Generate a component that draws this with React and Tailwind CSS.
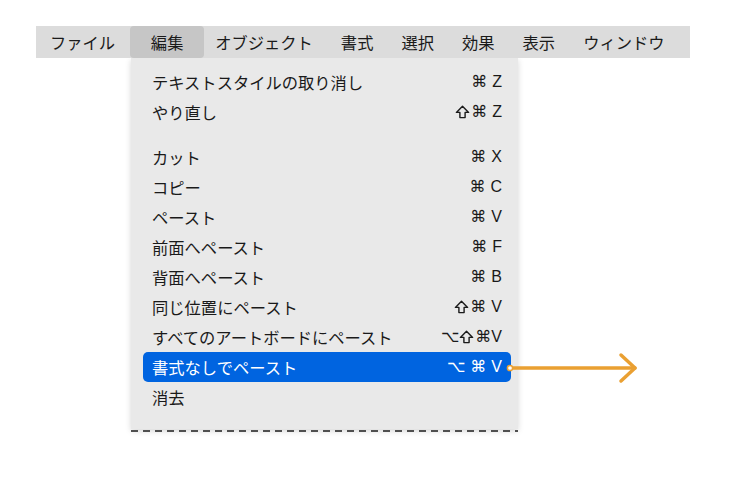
import React from 'react';

const menus = ['ファイル', '編集', 'オブジェクト', '書式', '選択', '効果', '表示', 'ウィンドウ'];

// rows of the 編集 dropdown, null = separator space
const items = [
  ['テキストスタイルの取り消し', '⌘ Z'],
  ['やり直し', '⇧⌘ Z'],
  null,
  ['カット', '⌘ X'],
  ['コピー', '⌘ C'],
  ['ペースト', '⌘ V'],
  ['前面へペースト', '⌘ F'],
  ['背面へペースト', '⌘ B'],
  ['同じ位置にペースト', '⇧⌘ V'],
  ['すべてのアートボードにペースト', '⌥⇧⌘V'],
  ['書式なしでペースト', '⌥ ⌘ V', true],
  ['消去', ''],
];

const jp = "font-['Noto_Sans_CJK_JP','Noto_Sans',sans-serif]";

// outlined shift arrow, the font one is too thin
function ShiftIcon() {
  return (
    <svg width="15" height="14" viewBox="0 0 15 14" fill="none" className="mr-[1px]">
      <path
        d="M7.5 1.2 L13.6 7.4 H10.1 V12.6 H4.9 V7.4 H1.4 Z"
        stroke="currentColor"
        strokeWidth="1.4"
        strokeLinejoin="round"
      />
    </svg>
  );
}

function Shortcut({ keys }) {
  return (
    <span className="font-['Liberation_Sans','DejaVu_Sans',sans-serif] text-[16px] flex items-center">
      {keys.split('').map((c, i) =>
        c === '⇧' ? (
          <ShiftIcon key={i} />
        ) : c === ' ' ? (
          <span key={i} className="w-[5px]" />
        ) : (
          <span key={i}>{c}</span>
        )
      )}
    </span>
  );
}

export default function App() {
  return (
    <div className={`relative w-[750px] h-[479px] bg-white overflow-hidden ${jp}`}>
      {/* menu bar */}
      <div className="relative z-10 mt-[26px] ml-[36px] w-[654px] h-[32px] bg-[#dcdcdc] flex items-center pl-[14px] text-[16.3px] text-[#1a1a1a]">
        {menus.map((m, i) =>
          m === '編集' ? (
            <div key={m} className="ml-[15px] w-[74px] h-[32px] rounded-[4px] bg-[#c6c6c6] flex items-center justify-center">
              {m}
            </div>
          ) : (
            <div key={m} className={i === 0 ? '' : i === 2 ? 'ml-[11px]' : 'ml-[28px]'}>
              {m}
            </div>
          )
        )}
      </div>

      {/* dropdown */}
      <div className="ml-[131px] w-[387px]">
        <div className="bg-[#e9e9e9] pt-[9px] pb-[17px] shadow-[0_2px_6px_rgba(0,0,0,0.16)]">
          {items.map((it, i) =>
            it === null ? (
              <div key={i} className="h-[15px]" />
            ) : (
              <div
                key={i}
                className={`ml-[12px] mr-[7px] h-[30px] px-[9px] rounded-[5px] flex items-center justify-between text-[16.3px] ${
                  it[2] ? 'bg-[#0064e0] text-white' : 'text-[#1a1a1a]'
                }`}
              >
                <span>{it[0]}</span>
                <Shortcut keys={it[1]} />
              </div>
            )
          )}
        </div>
        <div className="mt-[1px] h-[2px] bg-[repeating-linear-gradient(90deg,#505050_0_7px,transparent_7px_12px)]" />
      </div>

      {/* orange pointer arrow */}
      <svg className="absolute left-0 top-0" width="750" height="479" viewBox="0 0 750 479" fill="none">
        <line x1="511" y1="368" x2="635" y2="368" stroke="#eaa032" strokeWidth="3.5" strokeLinecap="round" />
        <polyline points="621,355 635,368 621,381" stroke="#eaa032" strokeWidth="3.5" strokeLinecap="round" strokeLinejoin="round" />
        <circle cx="510" cy="368" r="2.6" fill="#ffffff" stroke="#eaa032" strokeWidth="1.5" />
      </svg>
    </div>
  );
}
